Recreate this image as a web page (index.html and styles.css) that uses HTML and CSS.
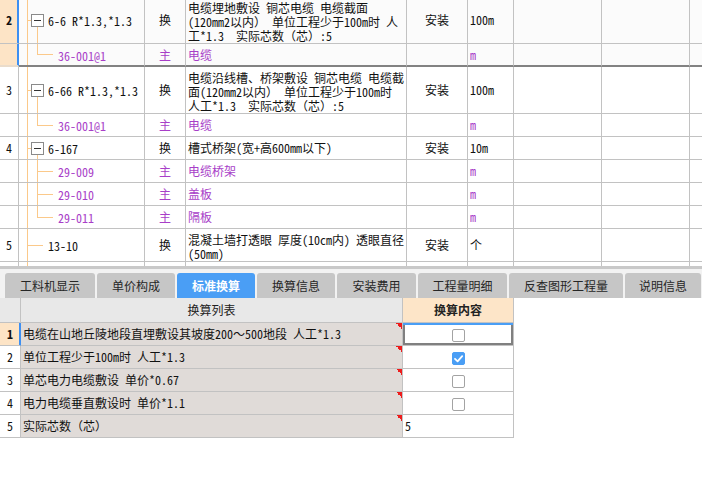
FILE: index.html
```html
<!DOCTYPE html>
<html lang="zh">
<head>
<meta charset="utf-8">
<title>标准换算</title>
<link rel="stylesheet" href="styles.css">
</head>
<body>
<div class="app">
  <div class="top-wrap">
    <table class="grid top-grid">
      <colgroup>
        <col class="c-num"><col class="c-tree"><col class="c-type"><col class="c-desc"><col class="c-inst"><col class="c-unit"><col class="c-e1"><col class="c-e2"><col class="c-e3">
      </colgroup>
      <tr class="multi sel-row">
        <td class="num sel"><b>2</b></td>
        <td class="tree parent"><span class="stub"></span><span class="box"></span><span class="code">6-6 R*1.3,*1.3</span></td>
        <td class="type">换</td>
        <td class="desc"><div class="ln">电缆埋地敷设 铜芯电缆 电缆截面</div><div class="ln">(120mm2以内） 单位工程少于100m时 人</div><div class="ln">工*1.3&nbsp; 实际芯数（芯）:5</div></td>
        <td class="inst">安装</td>
        <td class="unit">100m</td>
        <td></td><td></td><td></td>
      </tr>
      <tr class="single sel-row grp-end">
        <td class="num sel"></td>
        <td class="tree child last"><span class="code purple">36-001@1</span></td>
        <td class="type purple">主</td>
        <td class="desc purple">电缆</td>
        <td class="inst"></td>
        <td class="unit purple">m</td>
        <td></td><td></td><td></td>
      </tr>
      <tr class="multi">
        <td class="num">3</td>
        <td class="tree parent"><span class="stub"></span><span class="box"></span><span class="code">6-66 R*1.3,*1.3</span></td>
        <td class="type">换</td>
        <td class="desc"><div class="ln">电缆沿线槽、桥架敷设 铜芯电缆 电缆截</div><div class="ln">面(120mm2以内） 单位工程少于100m时</div><div class="ln">人工*1.3&nbsp; 实际芯数（芯）:5</div></td>
        <td class="inst">安装</td>
        <td class="unit">100m</td>
        <td></td><td></td><td></td>
      </tr>
      <tr class="single">
        <td class="num"></td>
        <td class="tree child last"><span class="code purple">36-001@1</span></td>
        <td class="type purple">主</td>
        <td class="desc purple">电缆</td>
        <td class="inst"></td>
        <td class="unit purple">m</td>
        <td></td><td></td><td></td>
      </tr>
      <tr class="single">
        <td class="num">4</td>
        <td class="tree parent"><span class="stub"></span><span class="box"></span><span class="code">6-167</span></td>
        <td class="type">换</td>
        <td class="desc">槽式桥架(宽+高600mm以下)</td>
        <td class="inst">安装</td>
        <td class="unit">10m</td>
        <td></td><td></td><td></td>
      </tr>
      <tr class="single">
        <td class="num"></td>
        <td class="tree child mid"><span class="code purple">29-009</span></td>
        <td class="type purple">主</td>
        <td class="desc purple">电缆桥架</td>
        <td class="inst"></td>
        <td class="unit purple">m</td>
        <td></td><td></td><td></td>
      </tr>
      <tr class="single">
        <td class="num"></td>
        <td class="tree child mid"><span class="code purple">29-010</span></td>
        <td class="type purple">主</td>
        <td class="desc purple">盖板</td>
        <td class="inst"></td>
        <td class="unit purple">m</td>
        <td></td><td></td><td></td>
      </tr>
      <tr class="single">
        <td class="num"></td>
        <td class="tree child last"><span class="code purple">29-011</span></td>
        <td class="type purple">主</td>
        <td class="desc purple">隔板</td>
        <td class="inst"></td>
        <td class="unit purple">m</td>
        <td></td><td></td><td></td>
      </tr>
      <tr class="multi">
        <td class="num">5</td>
        <td class="tree leaf"><span class="code">13-10</span></td>
        <td class="type">换</td>
        <td class="desc"><div class="ln">混凝土墙打透眼 厚度(10cm内) 透眼直径</div><div class="ln">(50mm)</div></td>
        <td class="inst">安装</td>
        <td class="unit">个</td>
        <td></td><td></td><td></td>
      </tr>
      <tr class="single">
        <td class="num"></td>
        <td class="tree"></td>
        <td></td><td></td><td></td><td></td><td></td><td></td><td></td>
      </tr>
    </table>
  </div>
  <div class="hbar"></div>
  <div class="tabs">
    <div class="tab w90">工料机显示</div>
    <div class="tab w78">单价构成</div>
    <div class="tab w78 active">标准换算</div>
    <div class="tab w78">换算信息</div>
    <div class="tab w79">安装费用</div>
    <div class="tab w89">工程量明细</div>
    <div class="tab w114">反查图形工程量</div>
    <div class="tab w76">说明信息</div>
  </div>
  <table class="grid conv-grid">
    <colgroup><col class="k-num"><col class="k-name"><col class="k-val"></colgroup>
    <tr class="head">
      <td class="hnum"></td>
      <td class="hname">换算列表</td>
      <td class="hval">换算内容</td>
    </tr>
    <tr>
      <td class="knum ksel"><b>1</b></td>
      <td class="kname">电缆在山地丘陵地段直埋敷设其坡度200～500地段 人工*1.3</td>
      <td class="kval cur"><span class="chk"></span></td>
    </tr>
    <tr>
      <td class="knum">2</td>
      <td class="kname">单位工程少于100m时 人工*1.3</td>
      <td class="kval"><span class="chk on"><svg viewBox="0 0 13 13" width="13" height="13"><path d="M3 6.8 L5.6 9.3 L10.2 4.2" fill="none" stroke="#fff" stroke-width="1.8" stroke-linecap="round" stroke-linejoin="round"/></svg></span></td>
    </tr>
    <tr>
      <td class="knum">3</td>
      <td class="kname">单芯电力电缆敷设 单价*0.67</td>
      <td class="kval"><span class="chk"></span></td>
    </tr>
    <tr>
      <td class="knum">4</td>
      <td class="kname">电力电缆垂直敷设时 单价*1.1</td>
      <td class="kval"><span class="chk"></span></td>
    </tr>
    <tr>
      <td class="knum">5</td>
      <td class="kname">实际芯数（芯）</td>
      <td class="kval txt">5</td>
    </tr>
  </table>
</div>
</body>
</html>
```
FILE: styles.css
```css
html, body {
  margin: 0;
  padding: 0;
  background: #fff;
}
body {
  width: 702px;
  height: 478px;
  overflow: hidden;
  font-family: "Noto Sans Mono CJK SC", "Noto Sans CJK SC", "DejaVu Sans Mono", monospace;
  font-size: 12px;
  line-height: 14px;
  color: #111;
}
.app {
  display: flex;
  flex-direction: column;
  width: 702px;
  height: 478px;
}

/* ---------- top grid ---------- */
.top-wrap {
  height: 266px;
  overflow: hidden;
  flex: none;
}
.grid {
  border-collapse: separate;
  border-spacing: 0;
  table-layout: fixed;
}
.top-grid {
  width: 780px;
  margin-top: -3px;
}
.c-num { width: 19px; }
.c-tree { width: 126px; }
.c-type { width: 41px; }
.c-desc { width: 221px; }
.c-inst { width: 61px; }
.c-unit { width: 46px; }
.c-e1 { width: 88px; }
.c-e2 { width: 88px; }
.c-e3 { width: 90px; }

.grid td {
  box-sizing: content-box;
  padding: 0;
  border-right: 1px solid #c2c2c2;
  border-bottom: 1px solid #c2c2c2;
  vertical-align: middle;
  white-space: nowrap;
}
.top-grid tr.single td { height: 22px; }
.top-grid tr.multi .desc {
  vertical-align: top;
  padding-top: 4px;
}
.ln {
  height: 14px;
  line-height: 14px;
}
.top-grid tr.sel-row td { background-color: #fbfbfb; }
.top-grid tr.grp-end td {
  height: 21px;
  border-bottom: 2px solid #828282;
}
.top-grid tr.grp-end td.num { border-bottom-color: #eadccb; }

.num {
  text-align: center;
}
.top-grid tr.sel-row td.num.sel,
.num.sel {
  background-color: #fde4c6;
  border-right-color: #3d8ff2;
  box-shadow: inset -1px 0 0 #3d8ff2;
}
.type { text-align: center; }
.desc { padding-left: 2px !important; }
.inst { text-align: center; }
.unit { padding-left: 2px !important; }
.purple { color: #a83ec8; }

/* tree column: connector lines drawn as backgrounds */
.tree {
  --tl: #fbc98a;
  background-image: linear-gradient(var(--tl), var(--tl));
  background-repeat: no-repeat;
  background-size: 1px 100%;
  background-position: 8px 0;
}
.tree.parent {
  padding-left: 8px !important;
  background-image:
    linear-gradient(var(--tl), var(--tl)),
    linear-gradient(var(--tl), var(--tl));
  background-size: 1px 100%, 1px calc(50% - 6px);
  background-position: 8px 0, 18px 100%;
}
.tree.child {
  padding-left: 39px !important;
  background-image:
    linear-gradient(var(--tl), var(--tl)),
    linear-gradient(var(--tl), var(--tl)),
    linear-gradient(var(--tl), var(--tl));
  background-size: 1px 100%, 1px 50%, 16px 1px;
  background-position: 8px 0, 18px 0, 18px 50%;
}
.tree.child.mid {
  background-size: 1px 100%, 1px 100%, 16px 1px;
}
.tree.leaf {
  padding-left: 29px !important;
  background-image:
    linear-gradient(var(--tl), var(--tl)),
    linear-gradient(var(--tl), var(--tl));
  background-size: 1px 100%, 16px 1px;
  background-position: 8px 0, 8px 50%;
}
.stub {
  display: inline-block;
  width: 4px;
  height: 1px;
  background: #fbc98a;
  vertical-align: middle;
}
.box {
  display: inline-block;
  box-sizing: border-box;
  width: 13px;
  height: 13px;
  border: 1px solid #8a8a8a;
  background: linear-gradient(#333, #333) no-repeat center / 7px 1px, #fff;
  vertical-align: middle;
  margin-right: 4px;
}
.code { vertical-align: middle; }

.hbar {
  flex: none;
  height: 3px;
  background: #c9c9c9;
}

/* ---------- tabs ---------- */
.tabs {
  flex: none;
  display: flex;
  gap: 2px;
  height: 29px;
  box-sizing: border-box;
  padding: 4px 0 0 5px;
  background: #f2f2f2;
}
.tab {
  flex: none;
  height: 25px;
  display: flex;
  align-items: center;
  justify-content: center;
  background: #c6c6c6;
  border-radius: 3px 3px 0 0;
  font-family: "Noto Sans CJK SC", sans-serif;
  font-size: 12px;
  color: #262626;
}
.tab.active {
  background: #4a9ef5;
  color: #fff;
  font-weight: bold;
}
.w76 { width: 76px; }
.w78 { width: 78px; }
.w79 { width: 79px; }
.w89 { width: 89px; }
.w90 { width: 90px; }
.w114 { width: 114px; }

/* ---------- conversion grid ---------- */
.conv-grid {
  width: 514px;
  flex: none;
}
.k-num { width: 21px; }
.k-name { width: 382px; }
.k-val { width: 111px; }
.conv-grid td { height: 22px; }
.conv-grid tr.head td {
  height: 24px;
  font-family: "Noto Sans CJK SC", sans-serif;
  text-align: center;
  color: #222;
}
.hnum, .hname { background: #e8e8e8; }
.hval {
  background: #fde5c8;
  font-weight: bold;
}
.knum {
  text-align: center;
  background: #fff;
}
.knum.ksel {
  background: #fde4c6;
  border-right-color: #3d8ff2;
  box-shadow: inset -1px 0 0 #3d8ff2;
}
.kname {
  padding-left: 2px !important;
  background:
    linear-gradient(to bottom left, #ee1c1c 50%, transparent 50%) no-repeat right top / 6px 6px,
    #e0dbd8;
}
.kval {
  text-align: center;
  background: #fff;
}
.kval.txt {
  text-align: left;
  padding-left: 2px !important;
}
.kval.cur {
  box-shadow: inset 0 2px 0 #4a9ef5, inset 0 0 0 2px #808080;
}
.chk {
  display: inline-block;
  box-sizing: border-box;
  width: 13px;
  height: 13px;
  border: 1px solid #a3a3a3;
  border-radius: 2px;
  background: #fff;
  vertical-align: middle;
}
.chk.on {
  border-color: #4a9ef5;
  background: #4a9ef5;
}
.chk svg {
  display: block;
  margin: -1px;
}
```
